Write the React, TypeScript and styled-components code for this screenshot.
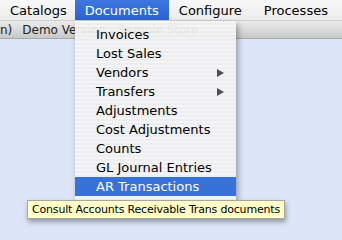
import React from "react";
import styled, { createGlobalStyle } from "styled-components";

const Global = createGlobalStyle`
  html, body { margin: 0; padding: 0; }
  body {
    width: 342px;
    height: 240px;
    overflow: hidden;
    background: #dde5f9;
    font-family: "DejaVu Sans", "Lucida Grande", sans-serif;
  }
`;

const Screen = styled.div`
  position: relative;
  width: 342px;
  height: 240px;
  display: flex;
  flex-direction: column;
  background: #dde5f9;
`;

const MenuBar = styled.div`
  height: 21px;
  display: flex;
  align-items: stretch;
  background: linear-gradient(#f8f8f8, #ececec);
  border-bottom: 1px solid #cfcfcf;
  box-sizing: border-box;
`;

const BarItem = styled.div<{ $active?: boolean; $left: number; $right: number }>`
  display: flex;
  align-items: center;
  padding: 0 ${(p) => p.$right}px 0 ${(p) => p.$left}px;
  font-size: 13px;
  color: ${(p) => (p.$active ? "#ffffff" : "#000000")};
  background: ${(p) => (p.$active ? "linear-gradient(#3d77e0, #2a62d3)" : "transparent")};
  white-space: nowrap;
`;

const WindowBar = styled.div`
  height: 17px;
  display: flex;
  align-items: center;
  background: linear-gradient(#ececec, #d6d6d6 60%, #c8c8c8);
  border-bottom: 1px solid #a9a9a9;
  font-size: 12px;
  color: #222;
  white-space: nowrap;
  gap: 10px;
`;

const Content = styled.div`
  flex: 1;
  background: #dde5f9;
`;

const Menu = styled.div`
  position: absolute;
  left: 75px;
  top: 21px;
  width: 161px;
  padding: 4px 0 4px;
  box-sizing: border-box;
  background: repeating-linear-gradient(
    rgba(246, 246, 246, 0.93) 0px,
    rgba(246, 246, 246, 0.93) 2px,
    rgba(238, 238, 238, 0.93) 2px,
    rgba(238, 238, 238, 0.93) 4px
  );
  box-shadow: 2px 3px 6px rgba(0, 0, 0, 0.35);
  display: flex;
  flex-direction: column;
`;

const MenuItem = styled.div<{ $active?: boolean }>`
  height: 19px;
  display: flex;
  align-items: center;
  justify-content: space-between;
  padding: 0 12px 0 21px;
  font-size: 13px;
  color: ${(p) => (p.$active ? "#ffffff" : "#000000")};
  background: ${(p) => (p.$active ? "#3872d8" : "transparent")};
  white-space: nowrap;
`;

const Arrow = styled.span`
  width: 0;
  height: 0;
  border-top: 4.5px solid transparent;
  border-bottom: 4.5px solid transparent;
  border-left: 7px solid #505050;
`;

const Tooltip = styled.div`
  position: absolute;
  left: 27px;
  top: 200px;
  height: 19px;
  padding: 0 4px;
  box-sizing: border-box;
  display: flex;
  align-items: center;
  background: #ffffc7;
  border: 1px solid #a8a8a0;
  box-shadow: 1px 3px 5px rgba(0, 0, 0, 0.35);
  font-size: 11px;
  letter-spacing: -0.18px;
  color: #000;
  white-space: nowrap;
`;

const items: { label: string; sub?: boolean; active?: boolean }[] = [
  { label: "Invoices" },
  { label: "Lost Sales" },
  { label: "Vendors", sub: true },
  { label: "Transfers", sub: true },
  { label: "Adjustments" },
  { label: "Cost Adjustments" },
  { label: "Counts" },
  { label: "GL Journal Entries" },
  { label: "AR Transactions", active: true },
];

export default function App() {
  return (
    <Screen>
      <Global />
      <MenuBar>
        <BarItem $left={10} $right={8}>Catalogs</BarItem>
        <BarItem $left={10} $right={10} $active>
          Documents
        </BarItem>
        <BarItem $left={10} $right={12}>Configure</BarItem>
        <BarItem $left={10} $right={10}>Processes</BarItem>
      </MenuBar>
      <WindowBar>
        <span>n)</span>
        <span>Demo Version - Sample Store</span>
      </WindowBar>
      <Content />
      <Menu>
        {items.map((it) => (
          <MenuItem key={it.label} $active={it.active}>
            <span>{it.label}</span>
            {it.sub && <Arrow />}
          </MenuItem>
        ))}
      </Menu>
      <Tooltip>Consult Accounts Receivable Trans documents</Tooltip>
    </Screen>
  );
}
